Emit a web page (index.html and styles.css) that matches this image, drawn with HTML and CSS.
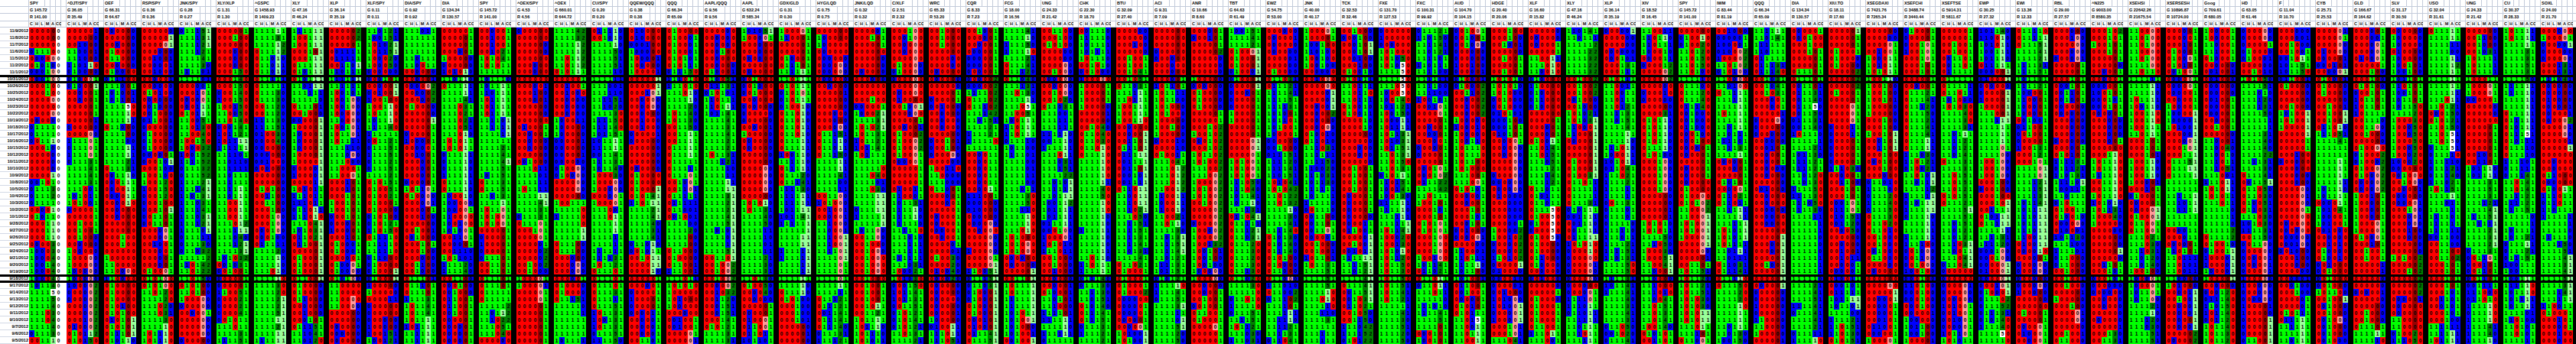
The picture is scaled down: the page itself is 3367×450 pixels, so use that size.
FILE: index.html
```html
<!DOCTYPE html>
<html lang="en">
<head>
<meta charset="utf-8">
<title>Signal sheet</title>
<link rel="stylesheet" href="styles.css">
</head>
<body>
<div class="sheet" id="sheet"></div>
<script src="script.js"></script>
</body>
</html>
```
FILE: styles.css
```css
html, body {
  margin: 0;
  padding: 0;
  background: #ffffff;
  overflow: hidden;
}
body {
  font-family: "Liberation Sans", Arial, sans-serif;
  font-weight: bold;
  color: #000000;
}
.sheet {
  display: grid;
  grid-template-columns: 38px repeat(476, 7px);
  grid-template-rows: 9px 9px 10px 8px repeat(46, 9px);
  width: 3370px;
}
.sheet span {
  box-sizing: border-box;
  white-space: nowrap;
  overflow: visible;
  display: block;
}
.h {
  border-right: 1px solid #c3cbda;
  border-bottom: 1px solid #c3cbda;
  font-size: 5.5px;
  line-height: 8px;
  padding-left: 1px;
  background: #ffffff;
}
.s1 { grid-column: span 1; }
.s2 { grid-column: span 2; }
.s3 { grid-column: span 3; }
.s4 { grid-column: span 4; }
.s5 { grid-column: span 5; }
.s6 { grid-column: span 6; }
.s7 { grid-column: span 7; }
.lab {
  text-align: center;
  padding-left: 0;
  line-height: 7px;
}
.d {
  font-size: 5.5px;
  text-align: right;
  padding-right: 1px;
  line-height: 8px;
  border-bottom: 1px solid #d3d9e5;
  background: #ffffff;
}
.c {
  font-size: 6.5px;
  text-align: center;
  line-height: 9px;
}
.R { background: #ff0000; }
.G { background: #00ff00; }
.B { background: #0000ff; }
.d5 { background: #008000; }
.l { background: #99ff99; }
.x { background: #990000; }
.p { background: #ff9999; }
.w { background: #ffffff; }
.k { background: #000000; }
.b1 { border-bottom: 1px solid #000000; line-height: 8px; }
.mk { border-top: 2px solid #000000; border-bottom: 2px solid #000000; line-height: 5px; }
.t1 { border-top: 1px solid #000000; line-height: 7px; }
```
FILE: script.js
```js
(function () {
  var T = [
    ["SPY","145.72","141.00"],["^DJT/SPY","36.05","35.49"],["OEF","66.31","64.67"],
    ["RSP/SPY","0.36","0.36"],["JNK/SPY","0.28","0.27"],["XLY/XLP","1.31","1.30"],
    ["^GSPC","1458.93","1409.23"],["XLY","47.16","46.24"],["XLP","36.14","35.19"],
    ["XLF/SPY","0.11","0.11"],["DIA/SPY","0.92","0.92"],["DIA","134.34","130.57"],
    ["SPY","145.72","141.00"],["^OEX/SPY","4.53","4.56"],["^OEX","660.01","644.72"],
    ["CU/SPY","0.20","0.20"],["QQEW/QQQ","0.38","0.38"],["QQQ","66.34","65.09"],
    ["AAPL/QQQ","9.56","9.56"],["AAPL","632.24","585.34"],["GDX/GLD","0.31","0.30"],
    ["HYG/LQD","0.75","0.75"],["JNK/LQD","0.32","0.32"],["C/XLF","2.51","2.32"],
    ["WRC","65.33","53.20"],["CQR","8.33","7.23"],["FCG","18.00","16.56"],
    ["UNG","24.33","21.42"],["CHK","22.30","18.70"],["BTU","32.09","27.40"],
    ["ACI","9.31","7.09"],["ANR","10.66","8.60"],["TBT","64.63","61.49"],
    ["EWZ","54.75","53.00"],["JNK","40.00","40.17"],["TCK","32.53","32.46"],
    ["FXE","131.70","127.53"],["FXC","100.31","99.92"],["AUD","104.70","104.15"],
    ["HDGE","20.40","20.06"],["XLF","16.60","15.82"],["XLY","47.16","46.24"],
    ["XLP","36.14","35.19"],["XIV","18.52","16.45"],["SPY","145.72","141.00"],
    ["IWM","83.44","81.19"],["QQQ","66.34","65.09"],["DIA","134.34","130.57"],
    ["XIU.TO","18.11","17.60"],["XSEGDAXI","7421.76","7265.34"],["XSEFCHI","3488.74","3440.44"],
    ["XSEFTSE","5914.31","5811.67"],["EWP","30.25","27.32"],["EWI","13.36","12.33"],
    ["RBL","29.00","27.57"],["^N225","9003.00","8580.35"],["XSEHSI","22642.26","21675.54"],
    ["XSERSESH","10896.87","10724.00"],["Goog","709.61","680.05"],["HD","63.05","61.46"],
    ["F","11.04","10.70"],["CYB","25.71","25.53"],["GLD","166.67","164.62"],
    ["SLV","31.17","30.50"],["USO","32.04","31.61"],["UNG","24.33","21.42"],
    ["CU","30.37","28.33"],["SOXL","24.00","21.70"]
  ];
  var D = ["11/9/2012","11/8/2012","11/7/2012","11/6/2012","11/5/2012","11/2/2012","11/1/2012",
    "10/31/2012","10/26/2012","10/25/2012","10/24/2012","10/23/2012","10/22/2012","10/19/2012",
    "10/18/2012","10/17/2012","10/16/2012","10/15/2012","10/12/2012","10/11/2012","10/10/2012",
    "10/9/2012","10/8/2012","10/5/2012","10/4/2012","10/3/2012","10/2/2012","10/1/2012",
    "9/28/2012","9/27/2012","9/26/2012","9/25/2012","9/24/2012","9/21/2012","9/20/2012",
    "9/19/2012","9/18/2012","9/17/2012","9/14/2012","9/13/2012","9/12/2012","9/11/2012",
    "9/10/2012","9/7/2012","9/6/2012","9/5/2012"];
  var N = D.length;

  function mulberry(a) {
    return function () {
      a |= 0; a = a + 0x6D2B79F5 | 0;
      var t = Math.imul(a ^ a >>> 15, 1 | a);
      t = t + Math.imul(t ^ t >>> 7, 61 | t) ^ t;
      return ((t ^ t >>> 14) >>> 0) / 4294967296;
    };
  }
  var rnd = mulberry(20121109);
  function pick(opts) {
    var u = rnd(), s = 0;
    for (var i = 0; i < opts.length; i++) { s += opts[i][1]; if (u < s) return opts[i][0]; }
    return opts[opts.length - 1][0];
  }

  var mk = [];
  for (var r = 0; r < N; r++) {
    var b = 0.45;
    if (r < 3) b = 0.3; else if (r < 7) b = 0.5; else if (r < 14) b = 0.35;
    else if (r < 18) b = 0.55; else if (r < 22) b = 0.4; else if (r < 28) b = 0.6;
    else if (r < 32) b = 0.35; else if (r < 38) b = 0.5; else b = 0.72;
    mk.push(b);
  }

  function textFor(c, bull) {
    if (c === "G" || c === "l") return "1";
    if (c === "R" || c === "x" || c === "p") return "0";
    if (c === "B") return bull ? (rnd() < 0.6 ? "1" : "0") : (rnd() < 0.85 ? "0" : "1");
    if (c === "d5") return String(2 + Math.floor(rnd() * 4));
    if (c === "w") return "5";
    return "";
  }

  var groups = [];
  var spy = {
    C: "RRRBRRBRRR" + "RRRRBBBRRR" + "RRBBBBRRRR" + "RRGGGGGGGG" + "GGGGBR",
    H: "RRRGBGBBRR" + "RRRBGGRRRR" + "RRBGGGRGRR" + "RBBBBBBBGG" + "GGGGGR",
    L: "RRRGBBBBRR" + "RRRRGGGRRR" + "RRGGGGBBRR" + "RRBBBBBGGG" + "GGGGGG",
    M: "RRRGRGGGGG" + "RRRRGGGGRR" + "RRRGGGRGGG" + "GRRRGRRGGG" + "GRRGGG",
    A: "xxRRpBppRR" + "pRpBGGlBBB" + "BlGddGlGll" + "ldddddddwd" + "dddddl"
  };
  var spyNum = {23:"3",24:"2",31:"3",32:"3",33:"4",34:"4",35:"4",36:"4",37:"4",39:"5",40:"4",41:"3",42:"4",43:"4",44:"3"};
  (function () {
    var cols = [];
    ["C","H","L","M","A"].forEach(function (key) {
      var arr = [];
      for (var r = 0; r < N; r++) {
        var ch = spy[key][r];
        var c = ch === "d" ? "d5" : ch;
        var t = c === "d5" ? spyNum[r] : (c === "w" ? "5" : (c === "G" || c === "l" ? "1" : "0"));
        arr.push([c, t]);
      }
      cols.push(arr);
    });
    var cci = [], sep = [];
    for (var r = 0; r < N; r++) { cci.push(["w", "0"]); sep.push(["w", ""]); }
    cols.push(cci); cols.push(sep);
    groups.push(cols);
  })();

  for (var g = 1; g < T.length; g++) {
    var st = [];
    var s = rnd() < mk[0];
    for (var r = 0; r < N; r++) {
      if (r > 0 && rnd() < 0.2) s = rnd() < mk[r];
      st.push(s);
    }
    var cols = [];
    for (var ci = 0; ci < 4; ci++) {
      var arr = [], prev = null;
      for (var r = 0; r < N; r++) {
        var c;
        if (prev && rnd() < 0.62) c = prev;
        else c = st[r] ? pick([["G",0.72],["B",0.2],["R",0.08]]) : pick([["R",0.72],["B",0.2],["G",0.08]]);
        prev = c;
        arr.push([c, textFor(c, st[r])]);
      }
      cols.push(arr);
    }
    var a = [], prevA = null;
    for (var r = 0; r < N; r++) {
      var c;
      if (prevA && rnd() < 0.6) c = prevA;
      else c = st[r] ? pick([["d5",0.45],["l",0.3],["G",0.13],["B",0.1],["w",0.02]]) : pick([["x",0.48],["p",0.22],["R",0.18],["B",0.12]]);
      prevA = c;
      a.push([c, textFor(c, st[r])]);
    }
    cols.push(a);
    var cc = [], prevC = null;
    for (var r = 0; r < N; r++) {
      var c;
      if (prevC && rnd() < 0.7) c = prevC;
      else c = pick([["B",0.42],["G",0.3],["R",0.13],["l",0.1],["d5",0.05]]);
      prevC = c;
      cc.push([c, c === "d5" ? "2" : textFor(c, st[r])]);
    }
    cols.push(cc);
    var sp = [];
    for (var r = 0; r < N; r++) sp.push(["k", ""]);
    cols.push(sp);
    groups.push(cols);
  }

  function span(txt, per) {
    var n = Math.ceil((txt.length * per + 3) / 7);
    return Math.max(1, Math.min(7, n));
  }
  function headRow(getText, per) {
    var h = '<span class="h"></span>';
    for (var g = 0; g < T.length; g++) {
      var t = getText(T[g]);
      var n = span(t, per);
      h += '<span class="h s' + n + '">' + t + '</span>';
      for (var k = n; k < 7; k++) h += '<span class="h"></span>';
    }
    return h;
  }
  var html = "";
  html += headRow(function (x) { return x[0]; }, 3.8);
  html += headRow(function (x) { return "G " + x[1]; }, 3.1);
  html += headRow(function (x) { return "R " + x[2]; }, 3.1);
  var labs = ["C","H","L","M","A","CCI",""];
  html += '<span class="h"></span>';
  for (var g = 0; g < T.length; g++) {
    for (var k = 0; k < 7; k++) html += '<span class="h lab">' + labs[k] + '</span>';
  }
  for (var r = 0; r < N; r++) {
    var bc = "";
    if (r === 6 || r === 35) bc = " b1";
    else if (r === 7 || r === 36) bc = " mk";
    else if (r === 8 || r === 37) bc = " t1";
    html += '<span class="d' + bc + '">' + D[r] + '</span>';
    for (var g = 0; g < groups.length; g++) {
      for (var k = 0; k < 7; k++) {
        var cell = groups[g][k][r];
        html += '<span class="c ' + cell[0] + bc + '">' + cell[1] + '</span>';
      }
    }
  }
  document.getElementById("sheet").innerHTML = html;
})();
```
